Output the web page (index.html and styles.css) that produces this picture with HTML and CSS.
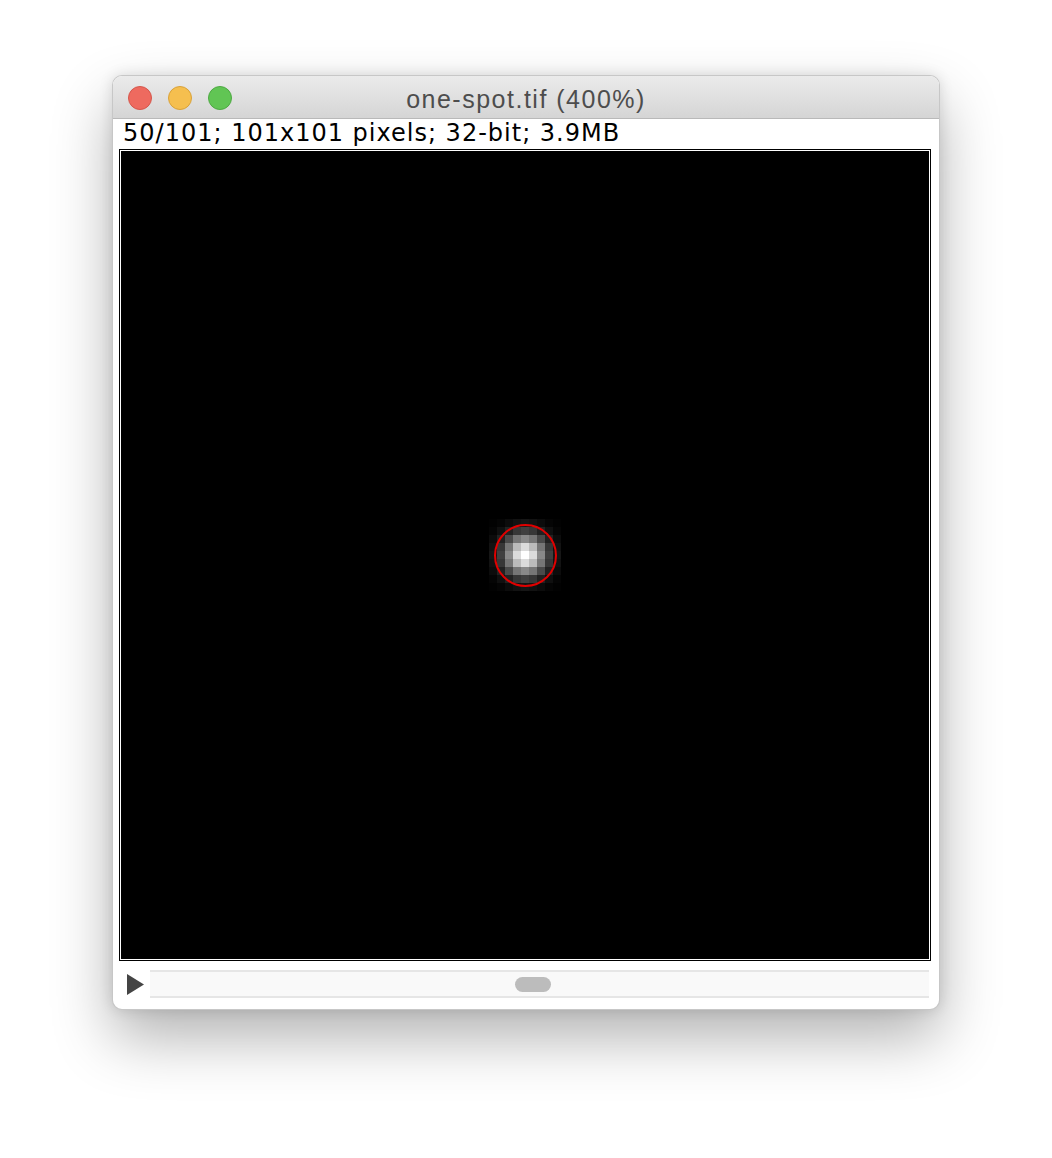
FILE: index.html
```html
<!DOCTYPE html>
<html>
<head>
<meta charset="utf-8">
<title>one-spot.tif</title>
<link rel="stylesheet" href="styles.css">
</head>
<body>
<div class="window">
  <div class="titlebar">
    <div class="lights">
      <span class="light red"></span>
      <span class="light yellow"></span>
      <span class="light green"></span>
    </div>
    <div class="title">one-spot.tif (400%)</div>
  </div>
  <div class="info">50/101; 101x101 pixels; 32-bit; 3.9MB</div>
  <div class="canvas-frame">
    <div class="canvas">
      <svg class="spot" width="72" height="72" viewBox="0 0 72 72" shape-rendering="crispEdges">
        <g>
          <rect x="0" y="0" width="8" height="8" fill="#020202"/><rect x="8" y="0" width="8" height="8" fill="#050505"/><rect x="16" y="0" width="8" height="8" fill="#0c0c0c"/><rect x="24" y="0" width="8" height="8" fill="#121212"/><rect x="32" y="0" width="8" height="8" fill="#161616"/><rect x="40" y="0" width="8" height="8" fill="#121212"/><rect x="48" y="0" width="8" height="8" fill="#0c0c0c"/><rect x="56" y="0" width="8" height="8" fill="#050505"/><rect x="64" y="0" width="8" height="8" fill="#020202"/>
          <rect x="0" y="8" width="8" height="8" fill="#050505"/><rect x="8" y="8" width="8" height="8" fill="#101010"/><rect x="16" y="8" width="8" height="8" fill="#222222"/><rect x="24" y="8" width="8" height="8" fill="#373737"/><rect x="32" y="8" width="8" height="8" fill="#404040"/><rect x="40" y="8" width="8" height="8" fill="#373737"/><rect x="48" y="8" width="8" height="8" fill="#222222"/><rect x="56" y="8" width="8" height="8" fill="#101010"/><rect x="64" y="8" width="8" height="8" fill="#050505"/>
          <rect x="0" y="16" width="8" height="8" fill="#0c0c0c"/><rect x="8" y="16" width="8" height="8" fill="#222222"/><rect x="16" y="16" width="8" height="8" fill="#4a4a4a"/><rect x="24" y="16" width="8" height="8" fill="#767676"/><rect x="32" y="16" width="8" height="8" fill="#898989"/><rect x="40" y="16" width="8" height="8" fill="#767676"/><rect x="48" y="16" width="8" height="8" fill="#4a4a4a"/><rect x="56" y="16" width="8" height="8" fill="#222222"/><rect x="64" y="16" width="8" height="8" fill="#0c0c0c"/>
          <rect x="0" y="24" width="8" height="8" fill="#121212"/><rect x="8" y="24" width="8" height="8" fill="#373737"/><rect x="16" y="24" width="8" height="8" fill="#767676"/><rect x="24" y="24" width="8" height="8" fill="#bbbbbb"/><rect x="32" y="24" width="8" height="8" fill="#dbdbdb"/><rect x="40" y="24" width="8" height="8" fill="#bbbbbb"/><rect x="48" y="24" width="8" height="8" fill="#767676"/><rect x="56" y="24" width="8" height="8" fill="#373737"/><rect x="64" y="24" width="8" height="8" fill="#121212"/>
          <rect x="0" y="32" width="8" height="8" fill="#161616"/><rect x="8" y="32" width="8" height="8" fill="#404040"/><rect x="16" y="32" width="8" height="8" fill="#898989"/><rect x="24" y="32" width="8" height="8" fill="#dbdbdb"/><rect x="32" y="32" width="8" height="8" fill="#ffffff"/><rect x="40" y="32" width="8" height="8" fill="#dbdbdb"/><rect x="48" y="32" width="8" height="8" fill="#898989"/><rect x="56" y="32" width="8" height="8" fill="#404040"/><rect x="64" y="32" width="8" height="8" fill="#161616"/>
          <rect x="0" y="40" width="8" height="8" fill="#121212"/><rect x="8" y="40" width="8" height="8" fill="#373737"/><rect x="16" y="40" width="8" height="8" fill="#767676"/><rect x="24" y="40" width="8" height="8" fill="#bbbbbb"/><rect x="32" y="40" width="8" height="8" fill="#dbdbdb"/><rect x="40" y="40" width="8" height="8" fill="#bbbbbb"/><rect x="48" y="40" width="8" height="8" fill="#767676"/><rect x="56" y="40" width="8" height="8" fill="#373737"/><rect x="64" y="40" width="8" height="8" fill="#121212"/>
          <rect x="0" y="48" width="8" height="8" fill="#0c0c0c"/><rect x="8" y="48" width="8" height="8" fill="#222222"/><rect x="16" y="48" width="8" height="8" fill="#4a4a4a"/><rect x="24" y="48" width="8" height="8" fill="#767676"/><rect x="32" y="48" width="8" height="8" fill="#898989"/><rect x="40" y="48" width="8" height="8" fill="#767676"/><rect x="48" y="48" width="8" height="8" fill="#4a4a4a"/><rect x="56" y="48" width="8" height="8" fill="#222222"/><rect x="64" y="48" width="8" height="8" fill="#0c0c0c"/>
          <rect x="0" y="56" width="8" height="8" fill="#050505"/><rect x="8" y="56" width="8" height="8" fill="#101010"/><rect x="16" y="56" width="8" height="8" fill="#222222"/><rect x="24" y="56" width="8" height="8" fill="#373737"/><rect x="32" y="56" width="8" height="8" fill="#404040"/><rect x="40" y="56" width="8" height="8" fill="#373737"/><rect x="48" y="56" width="8" height="8" fill="#222222"/><rect x="56" y="56" width="8" height="8" fill="#101010"/><rect x="64" y="56" width="8" height="8" fill="#050505"/>
          <rect x="0" y="64" width="8" height="8" fill="#020202"/><rect x="8" y="64" width="8" height="8" fill="#050505"/><rect x="16" y="64" width="8" height="8" fill="#0c0c0c"/><rect x="24" y="64" width="8" height="8" fill="#121212"/><rect x="32" y="64" width="8" height="8" fill="#161616"/><rect x="40" y="64" width="8" height="8" fill="#121212"/><rect x="48" y="64" width="8" height="8" fill="#0c0c0c"/><rect x="56" y="64" width="8" height="8" fill="#050505"/><rect x="64" y="64" width="8" height="8" fill="#020202"/>
        </g>
        <circle cx="36.5" cy="36.5" r="30.5" fill="none" stroke="#e00000" stroke-width="2" shape-rendering="geometricPrecision"/>
      </svg>
    </div>
  </div>
  <div class="controls">
    <svg class="play" width="17" height="21" viewBox="0 0 17 21"><polygon points="0,0 17,10.5 0,21" fill="#444444"/></svg>
    <div class="scrollbar"><div class="thumb"></div></div>
  </div>
</div>
</body>
</html>
```

FILE: styles.css
```css
* { box-sizing: border-box; }

html, body {
  margin: 0;
  padding: 0;
  background: #ffffff;
}

body {
  width: 1052px;
  height: 1158px;
  overflow: hidden;
  padding-top: 75px;
  padding-left: 112px;
}

.window {
  width: 828px;
  height: 935px;
  background: #ffffff;
  border: 1px solid rgba(0, 0, 0, 0.22);
  border-radius: 10px;
  overflow: hidden;
  box-shadow: 0 28px 60px rgba(0, 0, 0, 0.30), 0 0 14px rgba(0, 0, 0, 0.12);
  display: flex;
  flex-direction: column;
}

.titlebar {
  height: 43px;
  flex: none;
  display: flex;
  align-items: center;
  background: linear-gradient(#ebebeb, #d5d5d5);
  border-bottom: 1px solid #b9b9b9;
  position: relative;
}

.lights {
  display: flex;
  gap: 16px;
  padding-left: 15px;
  padding-top: 1px;
}

.light {
  width: 24px;
  height: 24px;
  border-radius: 50%;
  display: block;
}

.light.red { background: #ee6a5f; border: 1px solid #d5574c; }
.light.yellow { background: #f5bf4f; border: 1px solid #d9a23a; }
.light.green { background: #61c554; border: 1px solid #4ea943; }

.title {
  position: absolute;
  left: 0;
  right: 0;
  top: 9px;
  text-align: center;
  font-family: "Liberation Sans", Arial, sans-serif;
  font-size: 25px;
  letter-spacing: 1.5px;
  color: #4d4d4d;
  line-height: 28px;
}

.info {
  height: 30px;
  flex: none;
  padding-left: 10px;
  font-family: "DejaVu Sans", sans-serif;
  font-size: 24px;
  letter-spacing: 1px;
  line-height: 29px;
  color: #000000;
  white-space: nowrap;
}

.canvas-frame {
  margin-left: 6px;
  width: 812px;
  height: 812px;
  flex: none;
  border: 1px solid #000000;
  padding: 1px;
  background: #ffffff;
}

.canvas {
  width: 808px;
  height: 808px;
  background: #000000;
  position: relative;
}

.spot {
  position: absolute;
  left: 368px;
  top: 368px;
  display: block;
}

.controls {
  flex: none;
  display: flex;
  align-items: center;
  padding-top: 9px;
  padding-left: 14px;
}

.play {
  display: block;
  flex: none;
  margin-top: 1px;
}

.scrollbar {
  margin-left: 6px;
  width: 779px;
  height: 28px;
  background: #f9f9f9;
  border-top: 2px solid #e6e6e6;
  border-bottom: 2px solid #e6e6e6;
  display: flex;
  align-items: center;
  padding-left: 365px;
}

.thumb {
  width: 36px;
  height: 15px;
  border-radius: 8px;
  background: #bcbcbc;
}
```
